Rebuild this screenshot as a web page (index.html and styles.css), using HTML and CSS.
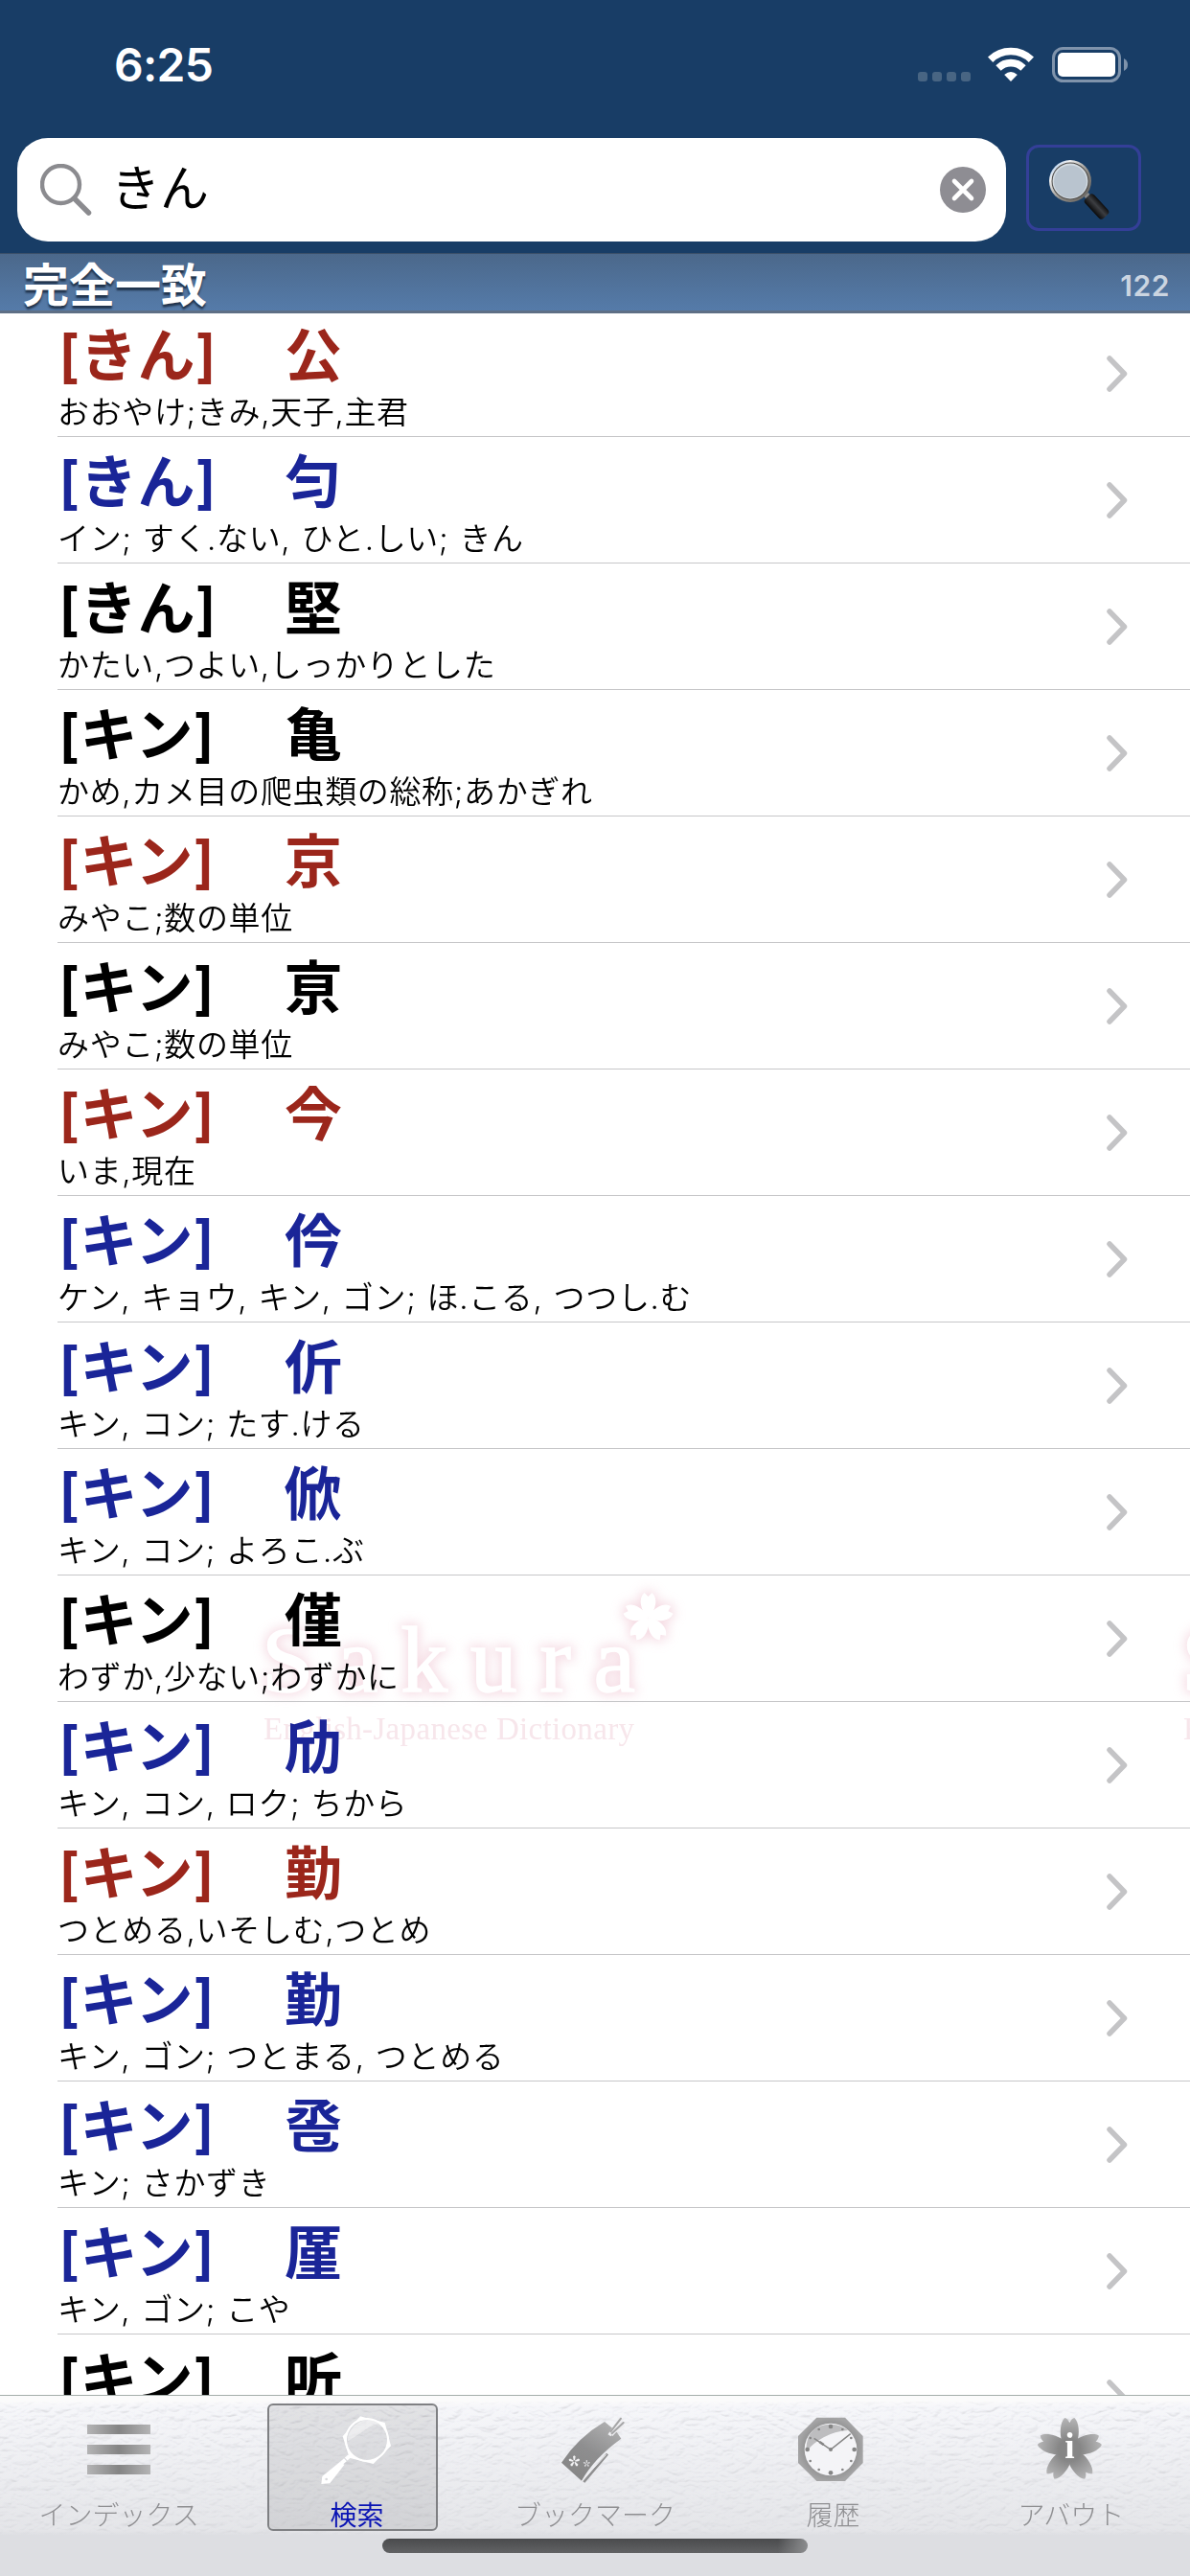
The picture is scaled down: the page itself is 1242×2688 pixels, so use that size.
FILE: index.html
```html
<!DOCTYPE html>
<html lang="ja">
<head>
    <meta charset="UTF-8">
    <meta name="viewport" content="width=device-width, initial-scale=1.0">
    <title>Sakura English-Japanese Dictionary</title>
    <link rel="stylesheet" href="styles.css">
</head>
<body>
    <div class="app">
        <header class="header">
            <div class="status-bar">
                <span class="time">6:25</span>
                <div class="status-icons">
                    <div class="signal"><i></i><i></i><i></i><i></i></div>
                    <svg class="wifi" width="48" height="36" viewBox="0 0 48 36">
                        <g fill="none" stroke="#fff" stroke-width="7.6">
                            <path d="M2.6 13.2 A30.5 30.5 0 0 1 45.4 13.2"/>
                            <path d="M11 22 A18.5 18.5 0 0 1 37 22"/>
                        </g>
                        <path d="M24 36 L17.2 29 Q24 22.8 30.8 29 Z" fill="#fff"/>
                    </svg>
                    <svg class="battery" width="80" height="37" viewBox="0 0 80 37">
                        <rect x="1.5" y="1.5" width="69" height="34" rx="10" fill="none" stroke="#7f93ab" stroke-width="3"/>
                        <rect x="6" y="6" width="60" height="25" rx="5" fill="#fff"/>
                        <path d="M75 12 Q79 14 79 18.500 Q79 23 75 25 Z" fill="#7f93ab"/>
                    </svg>
                </div>
            </div>
            <div class="search-row">
                <div class="search-field">
                    <svg width="54" height="54" viewBox="0 0 54 54">
                        <circle cx="21.500" cy="21.500" r="19.500" fill="none" stroke="#8b8b8f" stroke-width="4.400"/>
                        <path d="M35.500 36 L50.500 51" stroke="#8b8b8f" stroke-width="5.500" stroke-linecap="round"/>
                    </svg>
                    <span class="query">きん</span>
                    <svg class="clear" width="48" height="48" viewBox="0 0 48 48">
                        <circle cx="24" cy="24" r="24" fill="#8e8d93"/>
                        <path d="M15 15 L33 33 M33 15 L15 33" stroke="#fff" stroke-width="4.600" stroke-linecap="round"/>
                    </svg>
                </div>
                <div class="search-button">
                    <svg width="64" height="64" viewBox="0 0 64 64">
                        <defs>
                            <linearGradient id="rim" x1="0" y1="0" x2="1" y2="1">
                                <stop offset="0" stop-color="#7fb0e8"/>
                                <stop offset="0.250" stop-color="#f2f2f2"/>
                                <stop offset="0.600" stop-color="#8a8782"/>
                                <stop offset="1" stop-color="#5d5a56"/>
                            </linearGradient>
                            <linearGradient id="grip" x1="0" y1="1" x2="0" y2="0">
                                <stop offset="0" stop-color="#0a0a0b"/>
                                <stop offset="0.550" stop-color="#3c3e42"/>
                                <stop offset="1" stop-color="#0d0d0e"/>
                            </linearGradient>
                        </defs>
                        <path d="M37 38 L42 35 L46 41 L41 44 Z" fill="#8a8a8a"/>
                        <rect x="36.500" y="43" width="28" height="13" rx="4" fill="url(#grip)" transform="rotate(47 50.500 49.500)"/>
                        <circle cx="23" cy="23" r="22" fill="url(#rim)"/>
                        <circle cx="23" cy="23" r="19.500" fill="#4e4b48"/>
                        <circle cx="23" cy="23" r="18.500" fill="#d3dbe2"/>
                        <circle cx="23" cy="23.500" r="17" fill="#b9c4cf"/>
                    </svg>
                </div>
            </div>
        </header>

        <div class="section-header">
            <span class="section-title">完全一致</span>
            <span class="section-count">122</span>
        </div>

        <main class="list">
            <svg class="watermark" width="1242" height="200" viewBox="0 0 1242 200">
                <defs>
                    <filter id="glow" x="-20%" y="-30%" width="140%" height="160%">
                        <feGaussianBlur stdDeviation="6"/>
                    </filter>
                    <g id="word">
                        <text class="logo" x="273" y="125" textLength="390">Sakura</text>
                        <g transform="translate(676.500 48)">
                            <path id="petal" d="M0 -1 C-8 -9 -9 -20 -4 -25 L0 -21 L4 -25 C9 -20 8 -9 0 -1 Z"/>
                            <use href="#petal" transform="rotate(72)"/>
                            <use href="#petal" transform="rotate(144)"/>
                            <use href="#petal" transform="rotate(216)"/>
                            <use href="#petal" transform="rotate(288)"/>
                        </g>
                    </g>
                    <g id="mark">
                        <use href="#word" fill="#efc3d0" stroke="#efc3d0" stroke-width="6" opacity="0.600" filter="url(#glow)"/>
                        <use href="#word" fill="#fff" stroke="#fff" stroke-width="1.500"/>
                        <text class="tagline" x="275" y="175" textLength="387">English-Japanese Dictionary</text>
                    </g>
                </defs>
                <use href="#mark"/>
                <use href="#mark" x="960"/>
            </svg>
            <div id="entries"></div>
        </main>

        <nav class="tab-bar">
            <svg class="leather" width="1242" height="145">
                <filter id="grain" x="0" y="0" width="100%" height="100%">
                    <feTurbulence type="turbulence" baseFrequency="0.06 0.11" numOctaves="3" seed="8"/>
                    <feDiffuseLighting surfaceScale="1.500" diffuseConstant="1.130" lighting-color="#fcfcff">
                        <feDistantLight azimuth="250" elevation="62"/>
                    </feDiffuseLighting>
                </filter>
                <rect width="1242" height="145" filter="url(#grain)"/>
            </svg>
            <div class="tabs">
                <div class="tab">
                    <svg width="100" height="100" viewBox="0 0 100 100">
                        <defs>
                            <linearGradient id="bar">
                                <stop offset="0" stop-color="#b4b4b5"/>
                                <stop offset="0.500" stop-color="#848484"/>
                                <stop offset="1" stop-color="#b4b4b5"/>
                            </linearGradient>
                        </defs>
                        <g fill="url(#bar)">
                            <rect x="17" y="20" width="66" height="10"/>
                            <rect x="17" y="41" width="66" height="10"/>
                            <rect x="17" y="62" width="66" height="10"/>
                        </g>
                    </svg>
                    <span>インデックス</span>
                </div>
                <div class="tab active">
                    <svg width="100" height="100" viewBox="158 60 300 300">
                        <path d="M278 160 Q292 112 340 104 Q366 106 378 118 Q358 118 336 134 Q310 152 278 172 Z" fill="#fff" opacity="0.450"/>
                        <path fill="#fff" fill-rule="evenodd" d="M317 94 L394 114 L413 187 L358 243 L283 224 L262 157 Z M338 104 A64 64 0 0 0 338 232 A64 64 0 0 0 338 104 Z"/>
                        <circle cx="338" cy="168" r="66" fill="none" stroke="#fff" stroke-width="6"/>
                        <path d="M283 219 L258 241" stroke="#fff" stroke-width="12" stroke-dasharray="14 3 20 0"/>
                        <path fill="#fff" fill-rule="evenodd" d="M254 236 L267 246 L222 304 L195 306 L198 282 Z M207 291 a4 4 0 1 0 8 0 a4 4 0 1 0 -8 0"/>
                    </svg>
                    <span>検索</span>
                </div>
                <div class="tab">
                    <svg width="100" height="100" viewBox="903 60 300 300">
                        <defs>
                            <linearGradient id="tag" x1="0.800" y1="0" x2="0.200" y2="1">
                                <stop offset="0" stop-color="#b0b0b1"/>
                                <stop offset="0.500" stop-color="#8e8e8f"/>
                                <stop offset="1" stop-color="#858585"/>
                            </linearGradient>
                            <path id="blossom" d="M-2 -3 L-4 -15 L0 -18 L4 -15 L2 -3 Z"/>
                        </defs>
                        <path fill="url(#tag)" d="M1083 111 Q1000 160 948 239 L1011 296 Q1050 225 1135 164 L1120 142 Z"/>
                        <path d="M1018 300 L1092 212" stroke="#8f8f90" stroke-width="8"/>
                        <path d="M1012 296 L1088 214" stroke="#eeeef1" stroke-width="3"/>
                        <path d="M1098 154 L1134 100 M1104 152 L1142 112 M1112 142 L1144 122" stroke="#eeeef1" stroke-width="11"/>
                        <path d="M1102 142 L1134 101 M1106 148 L1142 114" stroke="#a5a5a6" stroke-width="6" stroke-linecap="round"/>
                        <g fill="#f1f1f3">
                            <g transform="translate(988 235)">
                                <use href="#blossom"/><use href="#blossom" transform="rotate(72)"/><use href="#blossom" transform="rotate(144)"/><use href="#blossom" transform="rotate(216)"/><use href="#blossom" transform="rotate(288)"/>
                            </g>
                            <g transform="translate(1027 242) scale(0.620)" opacity="0.800">
                                <use href="#blossom"/><use href="#blossom" transform="rotate(72)"/><use href="#blossom" transform="rotate(144)"/><use href="#blossom" transform="rotate(216)"/><use href="#blossom" transform="rotate(288)"/>
                            </g>
                        </g>
                    </svg>
                    <span>ブックマーク</span>
                </div>
                <div class="tab">
                    <svg width="100" height="100" viewBox="178 60 300 300">
                        <defs>
                            <radialGradient id="case">
                                <stop offset="0.600" stop-color="#858585"/>
                                <stop offset="1" stop-color="#a4a4a5"/>
                            </radialGradient>
                        </defs>
                        <path fill="url(#case)" d="M278 98 H367 L423 156 V240 L367 297 H278 L220 240 V156 Z"/>
                        <circle cx="322" cy="198" r="82" fill="#f4f4f7"/>
                        <path d="M245 196 Q248 120 322 119 Q355 120 376 138 Q335 140 300 160 Q265 180 252 198 Z" fill="#bdbdbf"/>
                        <g fill="#858585">
                            <circle cx="322" cy="126" r="7"/><circle cx="322" cy="271" r="7"/>
                            <circle cx="249" cy="198" r="7"/><circle cx="396" cy="198" r="7"/>
                            <circle cx="285" cy="135" r="4"/><circle cx="359" cy="135" r="4"/>
                            <circle cx="258" cy="162" r="4"/><circle cx="386" cy="162" r="4"/>
                            <circle cx="258" cy="234" r="4"/><circle cx="386" cy="234" r="4"/>
                            <circle cx="285" cy="261" r="4"/><circle cx="359" cy="261" r="4"/>
                            <circle cx="322" cy="198" r="6"/>
                        </g>
                        <path d="M270 163 L322 198 L384 149" fill="none" stroke="#858585" stroke-width="4.500"/>
                        <path d="M287 174 L300 183" stroke="#858585" stroke-width="8"/>
                    </svg>
                    <span>履歴</span>
                </div>
                <div class="tab">
                    <svg width="100" height="100" viewBox="923 60 300 300">
                        <defs>
                            <radialGradient id="flower" cx="1068" cy="200" r="100" gradientUnits="userSpaceOnUse">
                                <stop offset="0.350" stop-color="#868686"/>
                                <stop offset="1" stop-color="#b4b4b5"/>
                            </radialGradient>
                            <path id="leaf" d="M1044 172 C1036 150 1038 112 1053 99 C1058 100 1064 106 1068 114 C1072 106 1078 100 1083 99 C1098 112 1100 150 1092 172 L1068 200 Z"/>
                        </defs>
                        <g fill="url(#flower)">
                            <use href="#leaf"/>
                            <use href="#leaf" transform="rotate(72 1068 200)"/>
                            <use href="#leaf" transform="rotate(144 1068 200)"/>
                            <use href="#leaf" transform="rotate(216 1068 200)"/>
                            <use href="#leaf" transform="rotate(288 1068 200)"/>
                            <circle cx="1068" cy="200" r="34"/>
                        </g>
                        <text class="info" x="1068" y="226" text-anchor="middle">i</text>
                    </svg>
                    <span>アバウト</span>
                </div>
            </div>
            <div class="home-indicator"></div>
        </nav>
    </div>

    <script>
        const entries = [
            ['きん', '公', 'おおやけ;きみ,天子,主君', 'red'],
            ['きん', '匀', 'イン; すく.ない, ひと.しい; きん', 'blue'],
            ['きん', '堅', 'かたい,つよい,しっかりとした', ''],
            ['キン', '亀', 'かめ,カメ目の爬虫類の総称;あかぎれ', ''],
            ['キン', '京', 'みやこ;数の単位', 'red'],
            ['キン', '亰', 'みやこ;数の単位', ''],
            ['キン', '今', 'いま,現在', 'red'],
            ['キン', '仱', 'ケン, キョウ, キン, ゴン; ほ.こる, つつし.む', 'blue'],
            ['キン', '伒', 'キン, コン; たす.ける', 'blue'],
            ['キン', '俽', 'キン, コン; よろこ.ぶ', 'blue'],
            ['キン', '僅', 'わずか,少ない;わずかに', ''],
            ['キン', '劤', 'キン, コン, ロク; ちから', 'blue'],
            ['キン', '勤', 'つとめる,いそしむ,つとめ', 'red'],
            ['キン', '\uFA34', 'キン, ゴン; つとまる, つとめる', 'blue'],
            ['キン', '卺', 'キン; さかずき', 'blue'],
            ['キン', '厪', 'キン, ゴン; こや', 'blue'],
            ['キン', '听', '', '']
        ];

        const list = document.getElementById('entries');

        entries.forEach(([reading, kanji, meaning, color]) => {
            const row = document.createElement('div');
            row.className = 'entry';
            row.innerHTML = `
                <div class="entry-text">
                    <div class="entry-title ${color}"><span class="reading">[${reading}]</span><span>${kanji}</span></div>
                    <div class="entry-meaning">${meaning}</div>
                </div>
                <svg class="chevron" width="22" height="38" viewBox="0 0 22 38">
                    <path d="M3 3 L18.500 19 L3 35" fill="none" stroke="#c4c4c6" stroke-width="5.500" stroke-linecap="round" stroke-linejoin="round"/>
                </svg>
            `;
            list.appendChild(row);
        });
    </script>
</body>
</html>
```

FILE: styles.css
```css
*,
*::before {
    box-sizing: border-box;
}

body {
    margin: 0;
    background: #ffffff;
    font-family: Inter, "Noto Sans CJK JP", sans-serif;
}

svg {
    display: block;
    flex-shrink: 0;
}

.app {
    width: 1242px;
    height: 2688px;
    display: flex;
    flex-direction: column;
    overflow: hidden;
}

/* Header */
.header {
    height: 264px;
    flex-shrink: 0;
    background: #183d66;
}

.status-bar {
    height: 144px;
    display: flex;
    justify-content: space-between;
    padding: 39px 64px 0 119px;
}

.time {
    color: #ffffff;
    font-size: 48px;
    font-weight: 600;
    line-height: 58px;
    letter-spacing: -0.7px;
}

.status-icons {
    display: flex;
    margin-top: 10px;
}

.signal {
    display: flex;
    gap: 5px;
    margin: 26px 18px 0 0;
}

.signal i {
    width: 10px;
    height: 10px;
    border-radius: 3px;
    background: #486583;
}

.wifi {
    margin-right: 19px;
}

.search-row {
    display: flex;
    height: 108px;
    padding-left: 18px;
    gap: 21px;
}

.search-field {
    width: 1032px;
    height: 108px;
    display: flex;
    align-items: center;
    padding: 0 21px 0 24px;
    background: #ffffff;
    border-radius: 32px;
}

.query {
    flex: 1;
    padding-left: 20px;
    font-size: 51px;
    line-height: 105px;
    height: 108px;
}

.search-button {
    width: 120px;
    height: 90px;
    margin-top: 7px;
    padding: 12px 0 0 20px;
    border: 3px solid #343f98;
    border-radius: 13px;
}

/* Section header */
.section-header {
    position: relative;
    z-index: 1;
    height: 63px;
    flex-shrink: 0;
    display: flex;
    align-items: center;
    justify-content: space-between;
    padding: 7px 21px 0 24px;
    background: linear-gradient(#4b688b, #557ba9);
    border-top: 1px solid #3b4f69;
    border-bottom: 3px solid #5e6f85;
}

.section-title {
    color: #ffffff;
    font-size: 48px;
    font-weight: 700;
    line-height: 52px;
    text-shadow: 0 3px 2px rgba(20, 35, 55, 0.8);
}

.section-count {
    color: #cbd5e1;
    font-size: 30px;
    font-weight: 600;
    line-height: 52px;
    letter-spacing: 0.6px;
}

/* Result list */
.list {
    position: relative;
    z-index: 0;
    height: 2175px;
    margin-top: -3px;
    overflow: hidden;
    flex-shrink: 0;
}

.watermark {
    position: absolute;
    left: 0;
    top: 1316px;
    z-index: -1;
}

.logo {
    font-family: "Liberation Serif", serif;
    font-size: 98px;
    font-weight: 400;
}

.tagline {
    font-family: "Liberation Serif", serif;
    font-size: 33px;
    fill: #f7e6eb;
}

.entry {
    height: 132px;
    margin-left: 60px;
    padding-right: 65px;
    display: flex;
    align-items: center;
    justify-content: space-between;
    border-bottom: 1px solid #c6c6c8;
}

.entry-text {
    height: 131px;
    white-space: nowrap;
}

.entry-title {
    height: 84px;
    padding-left: 1px;
    color: #000000;
    font-size: 60px;
    font-weight: 600;
    line-height: 95px;
}

.entry-title.red {
    color: #9b261b;
}

.entry-title.blue {
    color: #1a2598;
}

.reading {
    display: inline-block;
    width: 236px;
}

.entry-meaning {
    font-size: 33px;
    font-weight: 350;
    line-height: 44px;
    letter-spacing: 0.65px;
    word-spacing: 1.2px;
}

/* Tab bar */
.tab-bar {
    position: relative;
    z-index: 1;
    height: 189px;
    flex-shrink: 0;
    border-top: 1px solid #a5aeab;
    background: #dddee2;
}

.leather {
    position: absolute;
    left: 0;
    top: 0;
}

.tabs {
    position: relative;
    display: flex;
    height: 146px;
    background: linear-gradient(#fbfbfb, #fbfbfb 5px, rgba(240, 241, 246, 0.6) 12px, rgba(222, 223, 227, 0.8) 140px, #dddee2);
}

.tab {
    flex: 1;
    display: flex;
    flex-direction: column;
    align-items: center;
    padding-top: 10px;
    position: relative;
    color: #8f8f92;
    font-family: "Noto Sans CJK JP", sans-serif;
    font-size: 28px;
    font-weight: 300;
    line-height: 26px;
}

.active {
    color: #0a14b4;
}

.active span {
    font-weight: 400;
}

.active::before {
    content: "";
    position: absolute;
    left: 31px;
    top: 8px;
    width: 178px;
    height: 133px;
    border: 2px solid #7f8083;
    border-radius: 6px;
    background: rgba(60, 62, 66, 0.11);
}

.tab svg,
.tab span {
    position: relative;
}

.info {
    font-family: "Liberation Serif", serif;
    font-size: 112px;
    font-weight: 700;
    fill: #ffffff;
}

.home-indicator {
    position: relative;
    width: 444px;
    height: 15px;
    margin: 3px auto 0;
    border-radius: 8px;
    background: linear-gradient(90deg, rgba(140, 141, 143, 0) 93%, #8c8d8f), linear-gradient(#4a4b4d, #616264);
}
```
